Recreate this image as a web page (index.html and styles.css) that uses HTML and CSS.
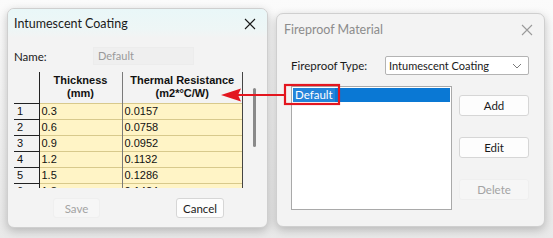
FILE: index.html
```html
<!DOCTYPE html>
<html>
<head>
<meta charset="utf-8">
<link rel="stylesheet" href="styles.css">
</head>
<body>
<div class="desk">
  <section class="dlg dlg-coating">
    <header class="title title-active">
      <span class="title-text">Intumescent Coating</span>
      <svg class="close" width="12" height="12" viewBox="0 0 12 12"><path d="M1 1L11 11M11 1L1 11" stroke="#1a1a1a" stroke-width="1.1" fill="none"/></svg>
    </header>
    <div class="body-coating">
      <div class="name-row">
        <span class="lbl">Name:</span>
        <div class="field">Default</div>
      </div>
      <div class="grid-wrap">
        <div class="grid-clip">
          <table class="grid">
            <thead>
              <tr><th class="rh"></th><th class="c1">Thickness<br>(mm)</th><th class="c2">Thermal Resistance<br>(m2*°C/W)</th></tr>
            </thead>
            <tbody>
              <tr><td class="rh">1</td><td>0.3</td><td>0.0157</td></tr>
              <tr><td class="rh">2</td><td>0.6</td><td>0.0758</td></tr>
              <tr><td class="rh">3</td><td>0.9</td><td>0.0952</td></tr>
              <tr><td class="rh">4</td><td>1.2</td><td>0.1132</td></tr>
              <tr><td class="rh">5</td><td>1.5</td><td>0.1286</td></tr>
              <tr><td class="rh">6</td><td>1.8</td><td>0.1424</td></tr>
            </tbody>
          </table>
        </div>
        <div class="vscroll"></div>
      </div>
      <div class="btn-row">
        <button class="btn btn-save" disabled>Save</button>
        <button class="btn btn-cancel">Cancel</button>
      </div>
    </div>
  </section>

  <section class="dlg dlg-material">
    <header class="title title-inactive">
      <span class="title-text">Fireproof Material</span>
      <svg class="close" width="12" height="12" viewBox="0 0 12 12"><path d="M1 1L11 11M11 1L1 11" stroke="#9a9a9a" stroke-width="1.1" fill="none"/></svg>
    </header>
    <div class="body-material">
      <div class="type-row">
        <span class="lbl type-lbl">Fireproof Type:</span>
        <div class="combo">
          <span>Intumescent Coating</span>
          <svg class="chev" width="10" height="6" viewBox="0 0 10 6"><path d="M1 1L5 5L9 1" stroke="#7a7a7a" stroke-width="1" fill="none"/></svg>
        </div>
      </div>
      <div class="list-row">
        <div class="listbox">
          <div class="item sel"><span class="focus">Default</span></div>
        </div>
        <div class="side-btns">
          <button class="btn side">Add</button>
          <button class="btn side">Edit</button>
          <button class="btn side" disabled>Delete</button>
        </div>
      </div>
    </div>
  </section>

  <svg class="annot" width="553" height="238" viewBox="0 0 553 238">
    <rect x="285" y="85" width="54" height="19" fill="none" stroke="#e3161f" stroke-width="2.2"/>
    <line x1="236" y1="95" x2="285" y2="95" stroke="#e3161f" stroke-width="2.2"/>
    <path d="M221 95L241 88.5L238 95L241 101.5Z" fill="#e3161f"/>
  </svg>
</div>
</body>
</html>
```

FILE: styles.css
```css
* { box-sizing: border-box; }
html, body { margin: 0; padding: 0; }
body {
  width: 553px;
  height: 238px;
  overflow: hidden;
  background: linear-gradient(#fbfbfb, #e9e9e9);
  font-family: Lato, "Noto Sans", "Liberation Sans", sans-serif;
  font-size: 11.5px;
  color: #1a1a1a;
}
.desk {
  position: relative;
  width: 553px;
  height: 238px;
  display: flex;
  align-items: flex-start;
}
.dlg {
  background: #f3f3f3;
  border: 1px solid #cfcfcf;
  border-radius: 7px;
  box-shadow: 0 3px 10px rgba(0,0,0,0.22);
  overflow: hidden;
  display: flex;
  flex-direction: column;
}
.dlg-coating {
  margin: 8px 0 0 7px;
  width: 261px;
  height: 220px;
}
.dlg-material {
  margin: 13px 0 0 8px;
  width: 269px;
  height: 214px;
}
.title {
  display: flex;
  align-items: center;
  justify-content: space-between;
  flex: none;
}
.title-active {
  height: 29px;
  padding: 0 11px 0 6px;
  background: linear-gradient(#e9f7f8, #eef6f6 70%, #f3f3f3);
}
.title-inactive {
  height: 31px;
  padding: 0 11px 0 7px;
}
.title-text { font-size: 12.5px; }
.title-inactive .title-text { color: #8c8c8c; }
.close { display: block; }

.body-coating {
  padding: 9px 0 0 6px;
  display: flex;
  flex-direction: column;
}
.name-row {
  display: flex;
  align-items: center;
  height: 18px;
}
.lbl { font-size: 11.5px; }
.name-row .lbl { width: 79px; }
.field {
  width: 101px;
  height: 18px;
  background: #efefef;
  border: 1px solid #ececec;
  color: #9a9a9a;
  padding-left: 4px;
  line-height: 16px;
  font-size: 11px;
}
.grid-wrap {
  margin-top: 7px;
  display: flex;
  height: 116px;
}
.grid-clip {
  width: 229px;
  height: 116px;
  overflow: hidden;
}
.grid {
  border-collapse: collapse;
  table-layout: fixed;
  font-family: "Liberation Sans", Arial, sans-serif;
  font-size: 11px;
  width: 229px;
}
.grid th {
  height: 31px;
  padding: 0;
  font-weight: bold;
  font-size: 11px;
  line-height: 13px;
  text-align: center;
  background: #f3f3f3;
  color: #111;
}
.grid th.rh { width: 25px; border-right: 1px solid #222; }
.grid th.c1 { width: 83px; border-right: 1px solid #7a7a7a; }
.grid th.c2 { border-right: 1px solid #444; }
.grid td {
  height: 16px;
  padding: 0 0 0 2px;
  background: #fff4c6;
  border-top: 1px solid #d8c98c;
  border-right: 1px solid #7a7a7a;
  line-height: 14px;
  color: #111;
}
.grid td:last-child { border-right: 1px solid #444; }
.grid td.rh {
  background: #f3f3f3;
  border-top: 1px solid #222;
  border-right: 1px solid #222;
  padding-left: 3px;
}
.vscroll {
  margin: 16px 0 0 10px;
  width: 3px;
  height: 59px;
  background: #8a8a8a;
  border-radius: 1.5px;
}
.btn-row {
  display: flex;
  margin-top: 10px;
  padding-left: 39px;
}
.btn {
  font-family: Lato, "Noto Sans", "Liberation Sans", sans-serif;
  font-size: 11.5px;
  background: #fdfdfd;
  border: 1px solid #d6d6d6;
  border-radius: 3px;
  color: #1a1a1a;
  padding: 0;
  height: 20px;
  line-height: 17px;
}
.btn:disabled {
  background: #f6f6f6;
  border-color: #efefef;
  color: #a3a3a3;
}
.btn-save { width: 47px; }
.btn-cancel { width: 48px; margin-left: 76px; }

.body-material {
  padding: 11px 0 0 14px;
  display: flex;
  flex-direction: column;
}
.type-row {
  display: flex;
  align-items: center;
  height: 19px;
}
.type-lbl { width: 94px; }
.combo {
  width: 144px;
  height: 19px;
  background: #fff;
  border: 1px solid #b3b3b3;
  border-radius: 2px;
  display: flex;
  align-items: center;
  justify-content: space-between;
  padding: 0 6px 0 3px;
  font-size: 11px;
}
.list-row {
  display: flex;
  margin-top: 11px;
}
.listbox {
  width: 161px;
  height: 124px;
  background: #fff;
  border: 1px solid #a9a9a9;
  padding: 1px;
}
.item {
  height: 14px;
  line-height: 14px;
  font-size: 11.5px;
}
.item.sel {
  background: #0a78d4;
  color: #fff;
}
.focus {
  display: inline-block;
  padding: 0 2px;
  background: #2384da;
}
.side-btns {
  display: flex;
  flex-direction: column;
  gap: 21px;
  margin: 9px 0 0 7px;
}
.btn.side { width: 70px; height: 21px; }

.annot {
  position: absolute;
  left: 0;
  top: 0;
  pointer-events: none;
}
```
